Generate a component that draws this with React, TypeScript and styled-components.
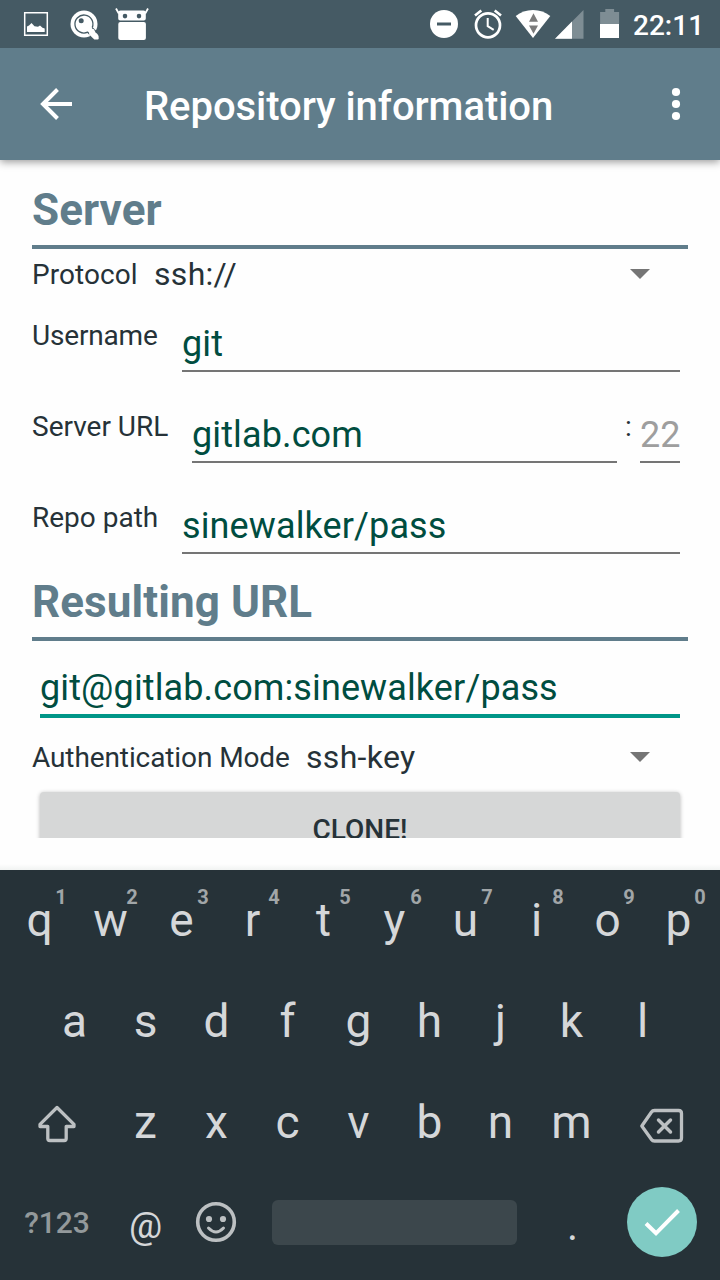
import React from 'react';
import styled, { createGlobalStyle } from 'styled-components';

const GlobalStyle = createGlobalStyle`
  * { box-sizing: border-box; }
  body { margin: 0; background: #fff; font-family: Roboto, sans-serif; -webkit-font-smoothing: antialiased; }
  svg { display: block; flex: none; }
`;

const Screen = styled.main`
  width: 720px;
  height: 1280px;
  display: flex;
  flex-direction: column;
  overflow: hidden;
  background: #fefefe;
`;

const StatusBar = styled.header`
  height: 48px;
  flex: none;
  display: flex;
  justify-content: space-between;
  background: #455a64;
  color: #fff;
  z-index: 2;
`;

const Clock = styled.span`
  width: 87px;
  font-size: 28px;
  font-weight: 500;
  line-height: 51px;
  margin-left: 13px;
  white-space: nowrap;
`;

const StatusGroup = styled.div`
  display: flex;
`;

const Toolbar = styled.div`
  height: 112px;
  flex: none;
  display: flex;
  align-items: center;
  background: #607d8b;
  color: #fff;
  box-shadow: 0 2px 8px rgba(0, 0, 0, 0.4);
  z-index: 1;
`;

const IconButton = styled.button<{ $width: number }>`
  width: ${(p) => p.$width}px;
  height: 112px;
  padding: 0;
  border: 0;
  background: none;
  color: inherit;
`;

const Title = styled.h1`
  flex: 1;
  margin: 0;
  font-size: 40px;
  font-weight: 500;
  line-height: 118px;
  height: 112px;
  letter-spacing: -0.06px;
  white-space: nowrap;
`;

const Form = styled.section`
  height: 678px;
  flex: none;
  padding: 16px 32px 0;
  overflow: hidden;
  color: #263238;
`;

const SectionTitle = styled.h2`
  margin: 0;
  height: 73px;
  border-bottom: 4px solid #607d8b;
  color: #607d8b;
  font-size: 44px;
  font-weight: 700;
  line-height: 69px;
  letter-spacing: 0.08px;
`;

const SpinnerRow = styled.div<{ $height: number }>`
  height: ${(p) => p.$height}px;
  display: flex;
  align-items: flex-start;
  line-height: 50px;
`;

const Label = styled.span<{ $width: number; $tracking?: number }>`
  width: ${(p) => p.$width}px;
  flex: none;
  font-size: 28px;
  letter-spacing: ${(p) => p.$tracking ?? 0}px;
  white-space: nowrap;

  ${SpinnerRow} > & {
    line-height: 52px;
  }
`;

const Selected = styled.span`
  flex: 1;
  font-size: 32px;
  letter-spacing: 0.3px;
`;

const Arrow = styled.svg`
  margin: 20px 38px 0 0;
`;

const FieldRow = styled.div`
  height: 91px;
  display: flex;
  padding-right: 8px;
  line-height: 55px;
`;

const Field = styled.div<{ $width?: number; $hint?: boolean }>`
  ${(p) => (p.$width ? `width: ${p.$width}px; flex: none;` : 'flex: 1;')}
  height: 64px;
  border-bottom: 2px solid #757575;
  color: ${(p) => (p.$hint ? '#9e9e9e' : '#004d40')};
  font-size: 36px;
  line-height: 73px;
  letter-spacing: 0.12px;
  white-space: nowrap;
`;

const Colon = styled.span`
  width: 23px;
  padding-left: 8px;
  font-size: 28px;
`;

const ResultGroup = styled.div`
  margin-top: -13px;
`;

const ResultField = styled.div`
  height: 77px;
  margin: 0 8px 14px;
  border-bottom: 4px solid #009688;
  color: #004d40;
  font-size: 36px;
  line-height: 95px;
  letter-spacing: 0.12px;
  white-space: nowrap;
`;

const CloneButton = styled.button`
  display: block;
  width: 640px;
  height: 72px;
  margin: 0 8px;
  padding: 2px 0 0;
  border: 0;
  border-radius: 4px;
  background: #d6d7d7;
  color: #263238;
  font: 500 28px/72px Roboto, sans-serif;
  box-shadow: 0 1px 4px rgba(0, 0, 0, 0.3);
`;

const BottomGap = styled.div`
  height: 32px;
  flex: none;
  background: linear-gradient(#fefefe 26px, #f1f3f2);
`;

const Keyboard = styled.section`
  flex: 1;
  background: #263238;
  color: #d5d7d9;
`;

const KeyRow = styled.div<{ $indent: number }>`
  height: 101px;
  padding-left: ${(p) => p.$indent}px;
  display: flex;
`;

const Key = styled.div<{ $size?: number; $drop?: number }>`
  position: relative;
  width: 71px;
  height: 101px;
  flex: none;
  text-align: center;
  font-size: ${(p) => p.$size ?? 46}px;
  line-height: ${(p) => 101 + (p.$drop ?? 0)}px;
`;

const Digit = styled.span`
  position: absolute;
  top: 15px;
  left: 47px;
  width: 20px;
  font-size: 20px;
  font-weight: 700;
  line-height: 24px;
  color: #a1a6a8;
`;

const IconKey = styled.div<{ $width: number }>`
  width: ${(p) => p.$width}px;
  flex: none;
`;

const SymbolsKey = styled.div`
  width: 110px;
  padding-left: 4px;
  flex: none;
  text-align: center;
  color: #93999b;
  font-size: 30px;
  font-weight: 500;
  line-height: 100px;
`;

const SpaceBar = styled.div`
  width: 245px;
  height: 45px;
  margin: 27px 20px 0 20px;
  flex: none;
  border-radius: 6px;
  background: #3c474c;
`;

const LetterKey = ({ letter, digit }: { letter: string; digit?: string }) => (
  <Key>
    {letter}
    {digit && <Digit>{digit}</Digit>}
  </Key>
);

const DropArrow = () => (
  <Arrow width="20" height="10" viewBox="0 0 20 10">
    <path d="M0 0h20L10 10z" fill="#757575" />
  </Arrow>
);

const NotificationIcons = () => (
  <svg width="160" height="48" viewBox="0 0 160 48" fill="#fff">
    <path d="M24.7 12.7h22.6v22.6H24.7z" fill="none" stroke="#fff" strokeWidth="1.5" />
    <path d="M27 32v-5.5l2-1 2.5-2.5 3 3.2 3.5.6 2-1.2 2.5 2.2 2.2.6V32z" />
    <circle cx="84" cy="24" r="13.5" />
    <path
      d="M92.2 27.6A9 9 0 1 0 87.7 32.2l3.5 3.6 M92.2 27.6l3.6 3.6"
      fill="none" stroke="#455a64" strokeWidth="1.3"
    />
    <path d="M91 27l1 2 2.2.2.5 2.5 2.7 2.2q1.7 1.5 1.3 4.9-.1.8-1 .8h-3.4l-5.4-5.4z" />
    <circle cx="81.2" cy="20.8" r="2.5" fill="#455a64" />
    <path d="M116 8.5l2.8 5M148 8.5l-2.8 5" stroke="#fff" strokeWidth="1.8" />
    <path
      fillRule="evenodd"
      d="M120.5 10.5h23q2.3 0 2.3 2.3v5.6q0 2-2 2h-23.6q-2 0-2-2v-5.6q0-2.3 2.3-2.3zM125 13.8a2.3 2.3 0 1 0 0 4.6 2.3 2.3 0 0 0 0-4.6zm14 0a2.3 2.3 0 1 0 0 4.6 2.3 2.3 0 0 0 0-4.6z"
    />
    <rect x="118.3" y="21.9" width="27.6" height="18" rx="2" />
  </svg>
);

const SystemIcons = () => (
  <svg width="200" height="48" viewBox="420 0 200 48" fill="#fff">
    <circle cx="444" cy="24" r="14" />
    <path d="M437 24h14" stroke="#455a64" strokeWidth="3" />
    <circle cx="488" cy="25.3" r="12" fill="none" stroke="#fff" strokeWidth="2.7" />
    <path d="M487.7 18v8.2l6 3.7" fill="none" stroke="#fff" strokeWidth="2" />
    <path d="M475 15.5l6.3-5.1M501 15.5l-6.3-5.1" stroke="#fff" strokeWidth="2.6" />
    <path d="M515.7 16Q523 10 533 10t17.3 6L533 38z" />
    <path d="M533.5 13.3l4.5 8.4h-9zM529 25.6h9l-4.5 8.2z" fill="#7b7b7b" />
    <path d="M583.5 10v28.7H555z" fill="#7e8d94" />
    <path d="M572 21.5v17.2h-17z" />
    <path d="M605.3 9h8.8v3h5v12h-19V12h5.2z" fill="#7e8d94" />
    <path d="M600 24h19v14h-19z" />
  </svg>
);

const topRow = 'qwertyuiop'.split('');

export default function App() {
  return (
    <>
      <GlobalStyle />
      <Screen>
        <StatusBar>
          <NotificationIcons />
          <StatusGroup>
            <SystemIcons />
            <Clock>22:11</Clock>
          </StatusGroup>
        </StatusBar>
        <Toolbar>
          <IconButton $width={144} aria-label="Back">
            <svg width="112" height="112" viewBox="0 0 112 112" fill="none" stroke="#fff" strokeWidth="4">
              <path d="M72 56H43M57.5 41.5L43 56l14.5 14.5" />
            </svg>
          </IconButton>
          <Title>Repository information</Title>
          <IconButton $width={88} aria-label="More options">
            <svg width="88" height="112" viewBox="0 0 88 112" fill="#fff">
              <circle cx="44" cy="44" r="4.1" />
              <circle cx="44" cy="56" r="4.1" />
              <circle cx="44" cy="68" r="4.1" />
            </svg>
          </IconButton>
        </Toolbar>
        <Form>
          <SectionTitle>Server</SectionTitle>
          <SpinnerRow $height={59}>
            <Label $width={122} $tracking={0.05}>Protocol</Label>
            <Selected>ssh://</Selected>
            <DropArrow />
          </SpinnerRow>
          <FieldRow>
            <Label $width={150} $tracking={-0.18}>Username</Label>
            <Field>git</Field>
          </FieldRow>
          <FieldRow>
            <Label $width={160}>Server URL</Label>
            <Field>gitlab.com</Field>
            <Colon>:</Colon>
            <Field $width={40} $hint>22</Field>
          </FieldRow>
          <FieldRow>
            <Label $width={150}>Repo path</Label>
            <Field>sinewalker/pass</Field>
          </FieldRow>
          <ResultGroup>
            <SectionTitle>Resulting URL</SectionTitle>
            <ResultField>git@gitlab.com:sinewalker/pass</ResultField>
            <SpinnerRow $height={60}>
              <Label $width={274} $tracking={-0.1}>Authentication Mode</Label>
              <Selected>ssh-key</Selected>
              <DropArrow />
            </SpinnerRow>
            <CloneButton>CLONE!</CloneButton>
          </ResultGroup>
        </Form>
        <BottomGap />
        <Keyboard>
          <KeyRow $indent={4}>
            {topRow.map((letter, i) => (
              <LetterKey key={letter} letter={letter} digit={String((i + 1) % 10)} />
            ))}
          </KeyRow>
          <KeyRow $indent={39}>
            {'asdfghjkl'.split('').map((letter) => (
              <LetterKey key={letter} letter={letter} />
            ))}
          </KeyRow>
          <KeyRow $indent={0}>
            <IconKey $width={110}>
              <svg width="110" height="101" viewBox="0 1072 110 101" fill="none" stroke="#bcc0c2" strokeWidth="3.3" strokeLinejoin="round">
                <path d="M57 1107.5l-17 16.8v2.2h7.800v12q0 2 2 2h14.400q2 0 2-2v-12H74v-2.200z" />
              </svg>
            </IconKey>
            {'zxcvbnm'.split('').map((letter) => (
              <LetterKey key={letter} letter={letter} />
            ))}
            <IconKey $width={113}>
              <svg width="113" height="101" viewBox="607 1072 113 101" fill="none" stroke="#bcc0c2" strokeWidth="3.3" strokeLinejoin="round">
                <path d="M654.5 1110.5h24q3 0 3 3v24.5q0 3-3 3h-24q-2 0-3-1.5l-9.7-13.5 9.7-14q1-1.5 3-1.5z" />
                <path d="M658.5 1120l12 12M670.5 1120l-12 12" strokeLinecap="round" strokeWidth="3.5" />
              </svg>
            </IconKey>
          </KeyRow>
          <KeyRow $indent={0}>
            <SymbolsKey>?123</SymbolsKey>
            <Key $size={37} $drop={4}>@</Key>
            <IconKey $width={71}>
              <svg width="71" height="101" viewBox="181 1173 71 101" fill="#bcc0c2">
                <circle cx="216" cy="1222" r="18.3" fill="none" stroke="#bcc0c2" strokeWidth="3.6" />
                <circle cx="209" cy="1219" r="3.1" />
                <circle cx="223" cy="1219" r="3.1" />
                <path d="M208.5 1228q7.5 8 15 0" fill="none" stroke="#bcc0c2" strokeWidth="3" strokeLinecap="round" />
              </svg>
            </IconKey>
            <SpaceBar />
            <Key $size={42} $drop={4}>.</Key>
            <IconKey $width={112}>
              <svg width="112" height="101" viewBox="608 1173 112 101">
                <circle cx="662" cy="1222" r="35" fill="#80cbc4" />
                <path d="M646 1223.5l10 9.8 22.5-22.8" fill="none" stroke="#fff" strokeWidth="4" />
              </svg>
            </IconKey>
          </KeyRow>
        </Keyboard>
      </Screen>
    </>
  );
}
